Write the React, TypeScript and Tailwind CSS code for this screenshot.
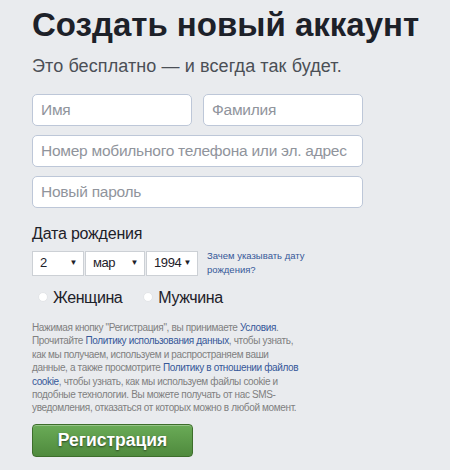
import React from 'react';

function FakeSelect({ value, width }: { value: string; width: string }) {
  return (
    <div className={`${width} h-[25px] bg-white border border-[#ccd0d5] flex items-center justify-between pl-[7px] pr-[6px] text-[13px] tracking-[-0.4px] text-[#1d2129]`}>
      <span>{value}</span>
      <span className="text-[8px] leading-none">▼</span>
    </div>
  );
}

function Radio({ label }: { label: string }) {
  return (
    <label className="flex items-center gap-[5px]">
      <span className="w-[10px] h-[10px] -mt-[3px] rounded-full bg-white border border-[#e3e5e8]" />
      <span className="text-[16px] tracking-[-0.4px] text-[#1d2129]">{label}</span>
    </label>
  );
}

export default function App() {
  const input =
    'h-[32px] bg-white border border-[#bdc7d8] rounded-[5px] pl-[8px] flex items-center text-[15.5px] tracking-[-0.25px] text-[#90949c] whitespace-nowrap';
  const link = 'text-[#365899]';

  return (
    <div
      className="w-[450px] h-[470px] bg-[#e9ebee] pl-[32px] pt-[5px] overflow-hidden"
      style={{ fontFamily: '"Liberation Sans", Arial, sans-serif' }}
    >
      <h1 className="text-[33px] font-bold leading-[40px] text-[#1d2129] whitespace-nowrap">
        Создать новый аккаунт
      </h1>
      <p className="text-[18px] leading-[22px] text-[#4b4f56] mt-[10px] whitespace-nowrap tracking-[0.1px]">
        Это бесплатно — и всегда так будет.
      </p>

      <div className="w-[331px] mt-[17px] flex flex-col gap-[9px]">
        <div className="flex gap-[11px]">
          <div className={`${input} flex-1`}>Имя</div>
          <div className={`${input} flex-1`}>Фамилия</div>
        </div>
        <div className={input}>Номер мобильного телефона или эл. адрес</div>
        <div className={input}>Новый пароль</div>
      </div>

      <div className="mt-[16px] text-[16px] leading-[20px] tracking-[-0.2px] text-[#1d2129]">
        Дата рождения
      </div>
      <div className="mt-[5px] flex items-center gap-px">
        <FakeSelect value="2" width="w-[52px]" />
        <FakeSelect value="мар" width="w-[60px]" />
        <FakeSelect value="1994" width="w-[52px]" />
        <div className={`ml-[8px] text-[9.5px] leading-[14px] ${link} w-[110px]`}>
          Зачем указывать дату
          <br />
          рождения?
        </div>
      </div>

      <div className="mt-[9px] pl-[6px] flex items-center gap-[21px]">
        <Radio label="Женщина" />
        <Radio label="Мужчина" />
      </div>

      <p className="mt-[11px] text-[10px] leading-[13.4px] tracking-[-0.35px] text-[#808080] whitespace-nowrap">
        Нажимая кнопку "Регистрация", вы принимаете <span className={link}>Условия</span>.
        <br />
        Прочитайте <span className={link}>Политику использования данных</span>, чтобы узнать,
        <br />
        как мы получаем, используем и распространяем ваши
        <br />
        данные, а также просмотрите <span className={link}>Политику в отношении файлов</span>
        <br />
        <span className={link}>cookie</span>, чтобы узнать, как мы используем файлы cookie и
        <br />
        подобные технологии. Вы можете получать от нас SMS-
        <br />
        уведомления, отказаться от которых можно в любой момент.
      </p>

      <button className="mt-[9px] w-[161px] h-[33px] rounded-[4px] border border-[#3d6e2b] bg-gradient-to-b from-[#6aab57] to-[#4f8a3d] text-white text-[17.5px] font-bold shadow-[inset_0_1px_0_rgba(255,255,255,0.3)] [text-shadow:0_1px_2px_rgba(0,0,0,0.55)]">
        Регистрация
      </button>
    </div>
  );
}
